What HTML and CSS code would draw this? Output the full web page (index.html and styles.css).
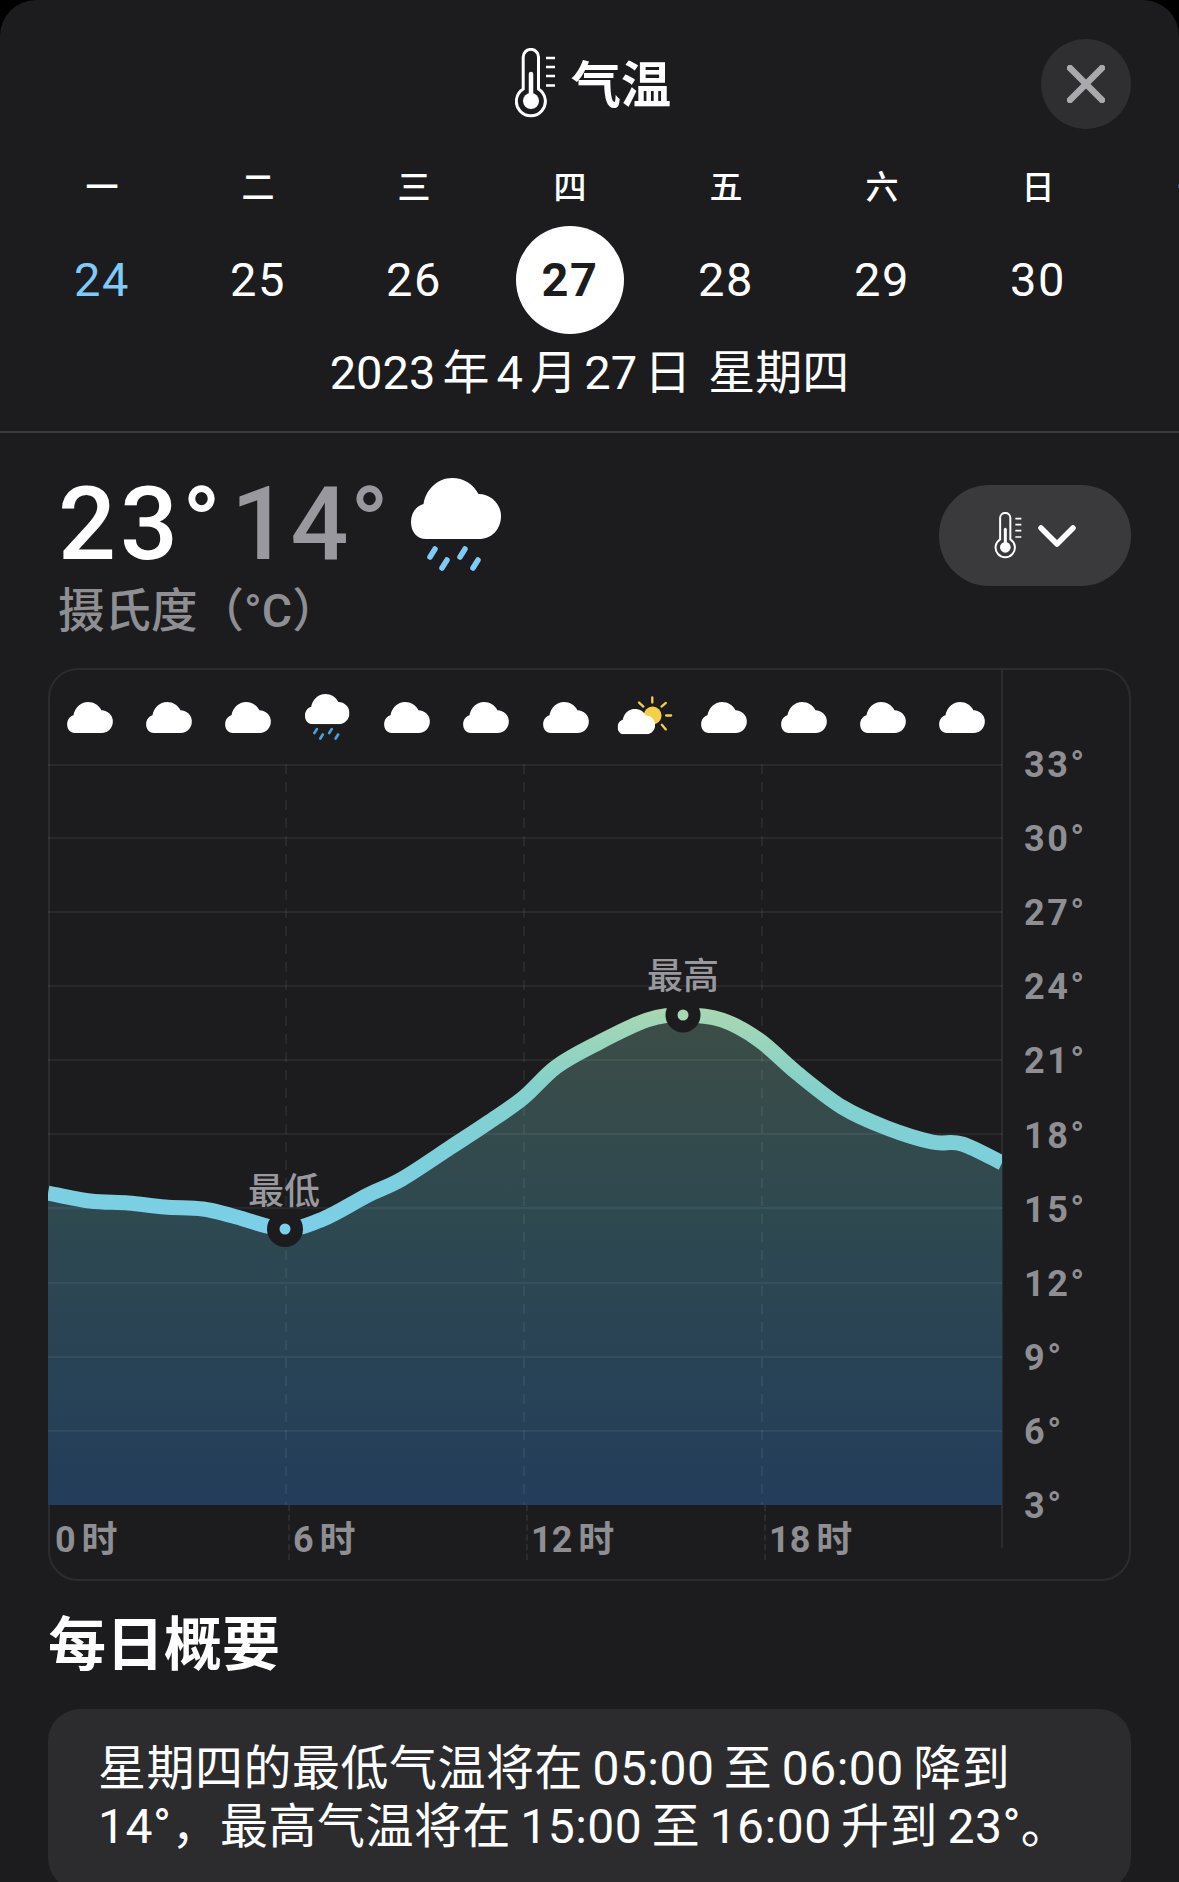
FILE: index.html
```html
<!DOCTYPE html>
<html>
    <head>
        <meta charset="UTF-8">
        <title>气温</title>
        <link rel="stylesheet" href="styles.css">
    </head>
    <body>
        <svg class="defs" width="0" height="0">
            <symbol id="cloud" viewBox="0 0 90 61">
                <path d="M15 61C6 61 0 54 0 44C0 35 5 28 12.5 26C15 11 27 0 41 0C53 0 62 6 67.5 16C80 16 90 26 90 38C90 51 81 61 68 61Z" fill="#fff"/>
            </symbol>
            <symbol id="rain" viewBox="0 0 91 93">
                <use href="#cloud" width="90" height="61"/>
                <path d="M24 71L19 79M54 71L49 79M36 82L31 90M67 82L62 90" stroke="currentColor" stroke-width="5.5" stroke-linecap="round"/>
            </symbol>
            <symbol id="thermo" viewBox="0 0 40 72">
                <path d="M8.2 41V9a7.65 7.65 0 0 1 15.3 0V41A14.5 14.5 0 1 1 8.2 41Z" fill="none" stroke="#fff" stroke-width="3"/>
                <path d="M16 26V50" stroke="#fff" stroke-width="4.5" stroke-linecap="round"/>
                <circle cx="16" cy="53" r="8" fill="#fff"/>
                <path d="M31 10H40M31 19H40M31 28H40M31 37.5H40" stroke="#fff" stroke-width="2.6"/>
            </symbol>
        </svg>

        <div class="sheet">
            <div class="title_row">
                <div></div>
                <div class="title">
                    <svg class="title_icon"><use href="#thermo"/></svg>
                    <span class="title_text">气温</span>
                </div>
                <div class="close">
                    <svg width="38" height="38" viewBox="0 0 38 38"><path d="M3 3L35 35M35 3L3 35" stroke="#a9a9ae" stroke-width="6.5" stroke-linecap="round"/></svg>
                </div>
            </div>

            <div class="week">
                <span>一</span><span>二</span><span>三</span><span>四</span><span>五</span><span>六</span><span>日</span><span>一</span>
            </div>
            <div class="dates">
                <span class="now">24</span><span>25</span><span>26</span><span class="picked">27</span><span>28</span><span>29</span><span>30</span>
            </div>
            <div class="long_date">2023 年 4 月 27 日<span class="day_name">星期四</span></div>

            <div class="today">
                <div>
                    <div class="temps">
                        <span class="high">23°</span>
                        <span class="low">14°</span>
                        <svg class="rain_big"><use href="#rain"/></svg>
                    </div>
                    <div class="unit">摄氏度（°C）</div>
                </div>
                <div class="switch">
                    <svg class="switch_icon"><use href="#thermo"/></svg>
                    <svg width="38" height="24" viewBox="0 0 38 24"><path d="M3 4L19 20L35 4" fill="none" stroke="#fff" stroke-width="5.5" stroke-linecap="round" stroke-linejoin="round"/></svg>
                </div>
            </div>

            <div class="chart">
                <div class="plot">
                    <div class="hours_icons">
                        <svg class="ico"><use href="#cloud"/></svg>
                        <svg class="ico"><use href="#cloud"/></svg>
                        <svg class="ico"><use href="#cloud"/></svg>
                        <svg class="ico_rain"><use href="#rain"/></svg>
                        <svg class="ico"><use href="#cloud"/></svg>
                        <svg class="ico"><use href="#cloud"/></svg>
                        <svg class="ico"><use href="#cloud"/></svg>
                        <svg class="ico_sun" viewBox="975 40 180 130">
                            <circle cx="1088" cy="105" r="27" fill="#f7cf45"/>
                            <path d="M1087 50V66M1128 67L1115 78M1129 105H1144M1116 133L1128 147M1047 66L1060 78" stroke="#f7cf45" stroke-width="7" stroke-linecap="round"/>
                            <use href="#cloud" x="982" y="85" width="114" height="77"/>
                        </svg>
                        <svg class="ico"><use href="#cloud"/></svg>
                        <svg class="ico"><use href="#cloud"/></svg>
                        <svg class="ico"><use href="#cloud"/></svg>
                        <svg class="ico"><use href="#cloud"/></svg>
                    </div>

                    <div class="graph">
                        <svg width="954" height="741" viewBox="48 764 954 741">
                            <defs>
                                <linearGradient id="fillGrad" gradientUnits="userSpaceOnUse" x1="0" y1="1010" x2="0" y2="1505">
                                    <stop offset="0" stop-color="#3d4d46"/>
                                    <stop offset="0.4" stop-color="#2f4950"/>
                                    <stop offset="1" stop-color="#233d5b"/>
                                </linearGradient>
                                <linearGradient id="lineGrad" gradientUnits="userSpaceOnUse" x1="0" y1="1010" x2="0" y2="1230">
                                    <stop offset="0" stop-color="#a8d7b2"/>
                                    <stop offset="0.35" stop-color="#84d1cb"/>
                                    <stop offset="0.7" stop-color="#7cd0dc"/>
                                    <stop offset="1" stop-color="#7bcfe8"/>
                                </linearGradient>
                                <path id="curve" d="M48 1193C55 1194.3 76.7 1199.3 90 1201C103.3 1202.7 115.5 1202 128 1203C140.5 1204 152.5 1206 165 1207C177.5 1208 191.7 1207.5 203 1209C214.3 1210.5 219.5 1212.7 233 1216C246.5 1219.3 269 1228.5 284 1229C299 1229.5 309 1224.7 323 1219C337 1213.3 354.8 1201.7 368 1195C381.2 1188.3 388.2 1187 402 1179C415.8 1171 436.5 1156.5 451 1147C465.5 1137.5 477 1130.2 489 1122C501 1113.8 511.8 1107.2 523 1098C534.2 1088.8 544.2 1075.8 556 1067C567.8 1058.2 578.8 1052.8 594 1045C609.2 1037.2 632.2 1025 647 1020C661.8 1015 670.5 1015 683 1015C695.5 1015 709.3 1015.8 722 1020C734.7 1024.2 746.5 1031.2 759 1040C771.5 1048.8 783.2 1061.8 797 1073C810.8 1084.2 827 1097.8 842 1107C857 1116.2 872 1122.2 887 1128C902 1133.8 919.5 1139.3 932 1142C944.5 1144.7 950.3 1140.5 962 1144C973.7 1147.5 995.3 1159.8 1002 1163"/>
                            </defs>
                            <path d="M48 1193C55 1194.3 76.7 1199.3 90 1201C103.3 1202.7 115.5 1202 128 1203C140.5 1204 152.5 1206 165 1207C177.5 1208 191.7 1207.5 203 1209C214.3 1210.5 219.5 1212.7 233 1216C246.5 1219.3 269 1228.5 284 1229C299 1229.5 309 1224.7 323 1219C337 1213.3 354.8 1201.7 368 1195C381.2 1188.3 388.2 1187 402 1179C415.8 1171 436.5 1156.5 451 1147C465.5 1137.5 477 1130.2 489 1122C501 1113.8 511.8 1107.2 523 1098C534.2 1088.8 544.2 1075.8 556 1067C567.8 1058.2 578.8 1052.8 594 1045C609.2 1037.2 632.2 1025 647 1020C661.8 1015 670.5 1015 683 1015C695.5 1015 709.3 1015.8 722 1020C734.7 1024.2 746.5 1031.2 759 1040C771.5 1048.8 783.2 1061.8 797 1073C810.8 1084.2 827 1097.8 842 1107C857 1116.2 872 1122.2 887 1128C902 1133.8 919.5 1139.3 932 1142C944.5 1144.7 950.3 1140.5 962 1144C973.7 1147.5 995.3 1159.8 1002 1163V1505H48Z" fill="url(#fillGrad)"/>
                            <g stroke="#fff" stroke-opacity="0.06" stroke-width="2">
                                <path d="M48 765H1002M48 838H1002M48 912H1002M48 986H1002M48 1060H1002M48 1134H1002M48 1208H1002M48 1283H1002M48 1357H1002M48 1431H1002"/>
                                <path d="M286 764V1505M524 764V1505M762 764V1505" stroke-dasharray="10 8"/>
                            </g>
                            <use href="#curve" fill="none" stroke="url(#lineGrad)" stroke-width="15"/>
                            <circle cx="285" cy="1229" r="18" fill="#1c1c1e"/>
                            <circle cx="285" cy="1229" r="5.5" fill="#7bcfe8"/>
                            <circle cx="683" cy="1015" r="17.5" fill="#1c1c1e"/>
                            <circle cx="683" cy="1015" r="5.5" fill="#a8d7b2"/>
                        </svg>
                        <span class="tag tag_low">最低</span>
                        <span class="tag tag_high">最高</span>
                    </div>

                    <div class="hours">
                        <div>0 时</div>
                        <div>6 时</div>
                        <div>12 时</div>
                        <div>18 时</div>
                    </div>
                </div>

                <div class="scale">
                    <span>33°</span><span>30°</span><span>27°</span><span>24°</span><span>21°</span><span>18°</span>
                    <span>15°</span><span>12°</span><span>9°</span><span>6°</span><span>3°</span>
                </div>
            </div>

            <h2 class="head">每日概要</h2>
            <div class="summary">星期四的最低气温将在 05:00 至 06:00 降到<br>14°，最高气温将在 15:00 至 16:00 升到 23°。</div>
        </div>
    </body>
</html>
```

FILE: styles.css
```css
html,body{
    margin: 0;
    background: #000;
}
body{
    font-family: Roboto, "Noto Sans CJK SC", sans-serif;
    color: #fff;
}
.defs{
    position: absolute;
}
.sheet{
    width: 1179px;
    height: 1882px;
    overflow: hidden;
    background: #1c1c1e;
    border-radius: 36px 36px 0 0;
}
.title_row{
    display: grid;
    grid-template-columns: 1fr auto 1fr;
    align-items: center;
    padding: 39px 48px 0;
}
.title{
    display: flex;
    align-items: center;
    gap: 16px;
    margin-left: 7px;
    font-size: 50px;
    font-weight: 700;
    line-height: 72px;
}
.title_text{
    padding-top: 4px;
}
.title_icon{
    width: 40px;
    height: 72px;
}
.close{
    justify-self: end;
    width: 90px;
    height: 90px;
    border-radius: 50%;
    background: #2f2f32;
    display: flex;
    align-items: center;
    justify-content: center;
}
.week,.dates{
    display: grid;
    grid-template-columns: repeat(8,156px);
    margin-left: 24px;
    text-align: center;
}
.week{
    margin-top: 39px;
    font-size: 33px;
    font-weight: 500;
    line-height: 40px;
}
.dates{
    margin-top: 18px;
    font-size: 47px;
    letter-spacing: 1.5px;
    line-height: 108px;
}
.now{
    color: #7ecbf9;
}
.picked{
    width: 108px;
    height: 108px;
    justify-self: center;
    border-radius: 50%;
    background: #fff;
    color: #1c1c1e;
    font-weight: 700;
}
.long_date{
    margin-top: 10px;
    height: 87px;
    border-bottom: 2px solid #3a3a3c;
    font-size: 47px;
    line-height: 58px;
    text-align: center;
    word-spacing: -4.5px;
}
.day_name{
    margin-left: 17px;
}
.today{
    display: flex;
    justify-content: space-between;
    padding: 41px 48px 0 58px;
}
.temps{
    display: flex;
    align-items: flex-start;
    height: 106px;
    font-size: 102px;
    font-weight: 500;
    line-height: 100px;
}
.high{
    width: 178px;
    letter-spacing: 4px;
}
.low{
    width: 175px;
    margin-left: -5px;
    padding-right: 5px;
    color: #98989e;
    letter-spacing: 1.5px;
}
.rain_big{
    width: 91px;
    height: 93px;
    margin-top: 4px;
    color: #7ccbf9;
}
.unit{
    margin-top: 1px;
    font-size: 46.5px;
    font-weight: 500;
    line-height: 60px;
    color: #8e8e93;
}
.switch{
    display: flex;
    align-items: center;
    gap: 16px;
    justify-content: center;
    width: 192px;
    height: 101px;
    margin-top: 11px;
    border-radius: 50px;
    background: #3a3a3c;
}
.switch_icon{
    width: 28px;
    height: 48px;
}
.chart{
    display: grid;
    grid-template-columns: 951px 1fr;
    align-items: start;
    box-sizing: border-box;
    width: 1083px;
    height: 913px;
    margin: 27px 0 0 48px;
    border: 2px solid #2c2c2e;
    border-radius: 30px;
}
.plot{
    width: 952px;
}
.hours_icons{
    display: grid;
    grid-template-columns: repeat(12,1fr);
    justify-items: center;
    align-items: center;
    height: 94px;
}
.ico{
    width: 46px;
    height: 31px;
}
.ico_rain{
    width: 45px;
    height: 46px;
    color: #4a9fd8;
}
.ico_sun{
    width: 60px;
    height: 43px;
    margin-top: -4px;
}
.graph{
    position: relative;
    height: 741px;
}
.graph svg{
    display: block;
    margin-left: -2px;
}
.tag{
    position: absolute;
    transform: translate(-50%,-50%);
    font-size: 36px;
    line-height: 40px;
    color: #98989e;
    font-weight: 500;
}
.tag_low{
    left: 234px;
    top: 428px;
}
.tag_high{
    left: 633px;
    top: 213px;
}
.hours{
    display: grid;
    grid-template-columns: repeat(4,238px);
    height: 43px;
    font-size: 36px;
    font-weight: 700;
    line-height: 40px;
    color: #8e8e93;
    word-spacing: -3px;
}
.hours div{
    box-sizing: border-box;
    padding: 15px 0 0 3px;
    border-left: 2px dashed #2c2c2e;
}
.hours div:first-child{
    border-left-color: transparent;
}
.scale{
    display: grid;
    grid-auto-rows: 74.1px;
    align-items: center;
    height: 878px;
    box-sizing: border-box;
    padding: 58px 0 0 21px;
    border-left: 2px solid #2c2c2e;
    font-size: 36px;
    font-weight: 700;
    letter-spacing: 2.5px;
    color: #8e8e93;
}
.head{
    margin: 29px 0 0 48px;
    font-size: 58px;
    font-weight: 700;
    line-height: 70px;
}
.summary{
    margin: 29px 48px 0;
    padding: 31px 0 34px 50px;
    border-radius: 32px;
    background: #2c2c2e;
    font-size: 48px;
    letter-spacing: 0.5px;
    line-height: 58px;
    white-space: nowrap;
    word-spacing: -3px;
}
```
